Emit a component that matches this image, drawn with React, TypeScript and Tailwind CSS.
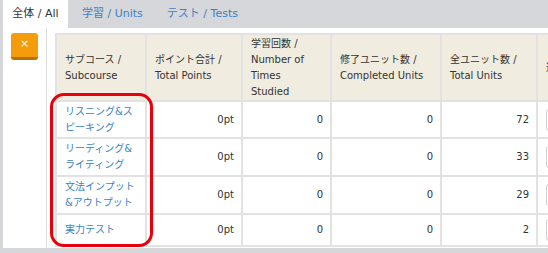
const rows = [
  { name: ["リスニング&ス", "ピーキング"], points: "0pt", studied: 0, done: 0, total: 72, h: "h-[37px]" },
  { name: ["リーディング&", "ライティング"], points: "0pt", studied: 0, done: 0, total: 33, h: "h-[38px]" },
  { name: ["文法インプット", "&アウトプット"], points: "0pt", studied: 0, done: 0, total: 29, h: "h-[38px]" },
  { name: ["実力テスト"], points: "0pt", studied: 0, done: 0, total: 2, h: "h-[32px]" },
];

const App = () => {
  return (
    <div className="w-[548px] h-[253px] overflow-hidden bg-[#d5d7db] font-['DejaVu_Sans','Noto_Sans_CJK_JP',sans-serif] text-[10px] leading-[16px] text-[#333]">
      {/* Tabs */}
      <div className="flex h-[28px] pl-[3px] text-[11px]">
        <div className="flex w-[65px] items-center justify-center bg-white text-[#333]">全体 / All</div>
        <div className="ml-[14px] flex items-center text-[#3d7fc2]">学習 / Units</div>
        <div className="ml-[24px] flex items-center text-[#3d7fc2]">テスト / Tests</div>
      </div>

      {/* Panel */}
      <div className="relative ml-[3px] flex h-[220px] bg-white">
        <div className="w-[44px] shrink-0 border-r border-[#dcdcdc] pl-[8px] pt-[5px]">
          <button className="flex h-[27px] w-[27px] items-start justify-center rounded-[3px] border-b-[3px] border-[#b87200] bg-[#f59c0c] pt-[5px] text-[11px] leading-none text-white">
            ×
          </button>
        </div>

        <div className="shrink-0 pl-[8px] pt-[5px]">
          <table className="w-[561px] table-fixed border-collapse whitespace-nowrap">
            <colgroup>
              <col className="w-[90px]" />
              <col className="w-[96px]" />
              <col className="w-[89px]" />
              <col className="w-[110px]" />
              <col className="w-[96px]" />
              <col className="w-[80px]" />
            </colgroup>
            <thead>
              <tr className="h-[67px] bg-[#f0ecdf] text-left align-middle">
                <th className="border-2 border-[#e2e2e2] px-[8px] font-normal">
                  サブコース /<br />Subcourse
                </th>
                <th className="border-2 border-[#e2e2e2] px-[8px] font-normal">
                  ポイント合計 /<br />Total Points
                </th>
                <th className="border-2 border-[#e2e2e2] px-[8px] font-normal">
                  学習回数 /<br />Number of<br />Times<br />Studied
                </th>
                <th className="border-2 border-[#e2e2e2] px-[8px] font-normal">
                  修了ユニット数 /<br />Completed Units
                </th>
                <th className="border-2 border-[#e2e2e2] px-[8px] font-normal">
                  全ユニット数 /<br />Total Units
                </th>
                <th className="border-2 border-[#e2e2e2] px-[8px] font-normal">
                  進捗 / Progress
                </th>
              </tr>
            </thead>
            <tbody>
              {rows.map((r) => (
                <tr key={r.name.join("")} className={r.h}>
                  <td className="border-2 border-[#e2e2e2] px-[8px] text-[#3d7fc2]">
                    {r.name.map((n, i) => (
                      <div key={i}>{n}</div>
                    ))}
                  </td>
                  <td className="border-2 border-[#e2e2e2] px-[7px] text-right">{r.points}</td>
                  <td className="border-2 border-[#e2e2e2] px-[7px] text-right">{r.studied}</td>
                  <td className="border-2 border-[#e2e2e2] px-[7px] text-right">{r.done}</td>
                  <td className="border-2 border-[#e2e2e2] px-[7px] text-right">{r.total}</td>
                  <td className="border-2 border-[#e2e2e2] px-[8px]">
                    <div className="h-[22px] w-[60px] rounded-[3px] border border-[#cfcfcf] bg-white" />
                  </td>
                </tr>
              ))}
            </tbody>
          </table>
        </div>

        {/* Highlight */}
        <div className="pointer-events-none absolute left-[47px] top-[65px] h-[154px] w-[103px] rounded-[14px] border-[3px] border-[#e8000b]" />
      </div>
    </div>
  );
};

export default App;
